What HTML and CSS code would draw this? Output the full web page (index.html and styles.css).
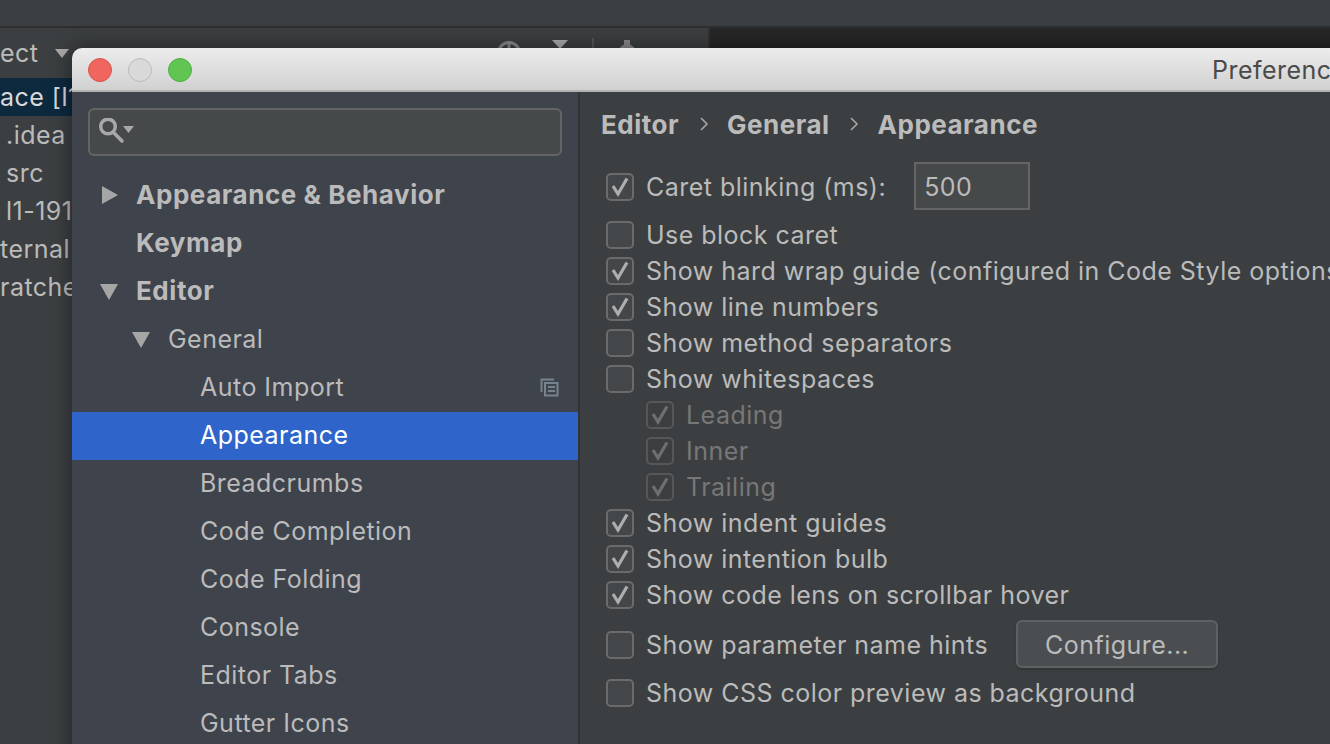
FILE: index.html
```html
<!DOCTYPE html>
<html lang="en">
<head>
<meta charset="utf-8">
<title>Preferences</title>
<link rel="stylesheet" href="styles.css">
</head>
<body>
<div class="ide">
  <div class="topbar"></div>
  <div class="workspace">
    <div class="project">
      <div class="project-head">
        <span class="project-title">ect</span>
        <span class="tri-small"></span>
        <span class="spacer"></span>
        <svg class="tool-globe" width="26" height="26" viewBox="0 0 26 26"><circle cx="13" cy="13" r="10.5" fill="none" stroke="#8a8a8a" stroke-width="3"/><path d="M13 2v22M2 13h22" stroke="#8a8a8a" stroke-width="3"/></svg>
        <span class="tri-tool"></span>
        <span class="tool-sep"></span>
        <svg class="tool-gear" width="28" height="28" viewBox="0 0 28 28"><circle cx="14" cy="14" r="9" fill="#8a8a8a"/><path d="M11 1h6v6h-6zM11 21h6v6h-6zM1 11h6v6H1zM21 11h6v6h-6z" fill="#8a8a8a"/></svg>
      </div>
      <div class="tree-row selected"><span>ace [l1-191</span></div>
      <div class="tree-row inset"><span>.idea</span></div>
      <div class="tree-row inset"><span>src</span></div>
      <div class="tree-row inset"><span>l1-191</span></div>
      <div class="tree-row"><span>ternal</span></div>
      <div class="tree-row"><span>ratches</span></div>
    </div>
    <div class="editor"></div>
  </div>
</div>

<div class="window">
  <div class="titlebar">
    <span class="light red"></span>
    <span class="light grey"></span>
    <span class="light green"></span>
    <span class="window-title">Preferences</span>
  </div>
  <div class="window-body">
    <aside class="sidebar">
      <div class="search">
        <svg class="search-icon" width="38" height="28" viewBox="0 0 38 28"><circle cx="10" cy="8.500" r="7.300" fill="none" stroke="#a8a8a8" stroke-width="3.500"/><path d="M15 14l9 9" stroke="#a8a8a8" stroke-width="3.500" stroke-linecap="round"/><path d="M25 8h11l-5.500 7z" fill="#a8a8a8"/></svg>
      </div>
      <nav class="nav">
        <div class="nav-row lvl0 strong"><span class="arrow right"></span>Appearance &amp; Behavior</div>
        <div class="nav-row lvl0 strong"><span class="arrow none"></span>Keymap</div>
        <div class="nav-row lvl0 strong"><span class="arrow down"></span>Editor</div>
        <div class="nav-row lvl1"><span class="arrow down"></span>General</div>
        <div class="nav-row lvl2">Auto Import
          <svg class="copy-icon" width="20" height="20" viewBox="0 0 20 20"><path d="M15 2.500H2.500V15" fill="none" stroke="#76838f" stroke-width="2"/><path d="M6 6h12.500v12.500H6z" fill="none" stroke="#76838f" stroke-width="2"/><path d="M9 10h7M9 14h7" stroke="#76838f" stroke-width="2"/></svg>
        </div>
        <div class="nav-row lvl2 active">Appearance</div>
        <div class="nav-row lvl2">Breadcrumbs</div>
        <div class="nav-row lvl2">Code Completion</div>
        <div class="nav-row lvl2">Code Folding</div>
        <div class="nav-row lvl2">Console</div>
        <div class="nav-row lvl2">Editor Tabs</div>
        <div class="nav-row lvl2">Gutter Icons</div>
      </nav>
    </aside>
    <main class="content">
      <div class="crumbs">
        <span>Editor</span>
        <svg class="chev" width="10" height="16" viewBox="0 0 10 16"><path d="M2 2l6 6-6 6" fill="none" stroke="#aaa" stroke-width="1.500"/></svg>
        <span>General</span>
        <svg class="chev" width="10" height="16" viewBox="0 0 10 16"><path d="M2 2l6 6-6 6" fill="none" stroke="#aaa" stroke-width="1.500"/></svg>
        <span>Appearance</span>
      </div>
      <div class="options">
        <label class="opt opt-first"><span class="box"><svg class="tick" viewBox="0 0 24 24"><path d="M5 11l5 8 9-15.500" /></svg></span>Caret blinking (ms):<span class="field">500</span></label>
        <label class="opt opt-second"><span class="box"></span>Use block caret</label>
        <label class="opt"><span class="box"><svg class="tick" viewBox="0 0 24 24"><path d="M5 11l5 8 9-15.500" /></svg></span>Show hard wrap guide (configured in Code Style options)</label>
        <label class="opt"><span class="box"><svg class="tick" viewBox="0 0 24 24"><path d="M5 11l5 8 9-15.500" /></svg></span>Show line numbers</label>
        <label class="opt"><span class="box"></span>Show method separators</label>
        <label class="opt"><span class="box"></span>Show whitespaces</label>
        <label class="opt sub"><span class="box"><svg class="tick" viewBox="0 0 24 24"><path d="M5 11l5 8 9-15.500" /></svg></span>Leading</label>
        <label class="opt sub"><span class="box"><svg class="tick" viewBox="0 0 24 24"><path d="M5 11l5 8 9-15.500" /></svg></span>Inner</label>
        <label class="opt sub"><span class="box"><svg class="tick" viewBox="0 0 24 24"><path d="M5 11l5 8 9-15.500" /></svg></span>Trailing</label>
        <label class="opt"><span class="box"><svg class="tick" viewBox="0 0 24 24"><path d="M5 11l5 8 9-15.500" /></svg></span>Show indent guides</label>
        <label class="opt"><span class="box"><svg class="tick" viewBox="0 0 24 24"><path d="M5 11l5 8 9-15.500" /></svg></span>Show intention bulb</label>
        <label class="opt"><span class="box"><svg class="tick" viewBox="0 0 24 24"><path d="M5 11l5 8 9-15.500" /></svg></span>Show code lens on scrollbar hover</label>
        <label class="opt opt-hints"><span class="box"></span>Show parameter name hints<span class="btn">Configure...</span></label>
        <label class="opt opt-last"><span class="box"></span>Show CSS color preview as background</label>
      </div>
    </main>
  </div>
</div>
</body>
</html>
```

FILE: styles.css
```css
html, body {
  margin: 0;
  height: 744px;
  overflow: hidden;
  background: #3c3f41;
  font-family: Inter, Roboto, "Liberation Sans", sans-serif;
  font-size: 25px;
  letter-spacing: .47px;
  color: #bbbbbb;
}
.ide { display: flex; flex-direction: column; height: 744px; }
.topbar { height: 26px; background: #3c3f41; border-bottom: 2px solid #2e2f30; flex: none; }
.workspace { display: flex; flex: 1; }
.project { width: 708px; background: #3c3f41; border-right: 2px solid #303132; flex: none; }
.project-head { display: flex; align-items: center; height: 50px; color: #bbb; }
.project-title { margin-right: 17px; }
.tri-small { width: 0; height: 0; border: 7px solid transparent; border-top: 9px solid #aaa; border-bottom: 0; }
.spacer { flex: 1; }
.tool-globe { margin-right: 30px; }
.tri-tool { width: 0; height: 0; border: 8px solid transparent; border-top: 9px solid #aaa; border-bottom: 0; margin-right: 24px; margin-top: -18px; }
.tool-sep { width: 2px; height: 30px; background: #555; margin-right: 19px; }
.tool-gear { margin-right: 67px; }
.tree-row { height: 38px; display: flex; align-items: center; padding-left: 0; white-space: nowrap; }
.tree-row.selected { background: #0d293e; color: #d8d8d8; }
.tree-row.inset { padding-left: 6px; }
.editor { flex: 1; background: #272727; }

.window {
  position: absolute;
  left: 72px;
  top: 48px;
  width: 1320px;
  height: 760px;
  border-radius: 10px 10px 0 0;
  background: #3c3f41;
  box-shadow: 0 0 22px rgba(0, 0, 0, .45);
  overflow: hidden;
  display: flex;
  flex-direction: column;
}
.titlebar {
  height: 40px;
  padding-top: 2px;
  flex: none;
  display: flex;
  align-items: center;
  padding-left: 16px;
  gap: 16px;
  background: linear-gradient(#ececec, #d1d1d1);
  border-bottom: 2px solid #b2b2b2;
}
.light { width: 22px; height: 22px; border-radius: 50%; border: 1px solid; flex: none; }
.red { background: #f0665e; border-color: #d9534b; }
.grey { background: #d9d9d9; border-color: #bcbcbc; }
.green { background: #60c553; border-color: #4fae43; }
.window-title { margin-left: 1004px; color: #4a4a4a; white-space: nowrap; }
.window-body { display: flex; flex: 1; min-height: 0; }
.sidebar { width: 506px; flex: none; background: #3f434c; border-right: 2px solid #323334; }
.search {
  margin: 16px;
  height: 44px;
  background: #45494a;
  border: 2px solid #646464;
  border-radius: 6px;
  display: flex;
  align-items: center;
  padding-left: 8px;
}
.nav-row { height: 48px; box-sizing: border-box; padding-bottom: 2px; display: flex; align-items: center; white-space: nowrap; position: relative; }
.strong { font-weight: 700; font-size: 26px; letter-spacing: .55px; padding-bottom: 3px; }
.lvl0 { padding-left: 30px; }
.lvl1 { padding-left: 60px; }
.lvl2 { padding-left: 128px; }
.active { background: #2f65ca; color: #fff; }
.arrow { width: 34px; flex: none; display: inline-block; height: 0; }
.lvl1 .arrow { width: 36px; }
.lvl0 .arrow.down { width: 36px; margin-left: -2px; }
.arrow.right::before {
  content: "";
  display: block;
  width: 0; height: 0;
  margin-top: -9px;
  border-top: 9px solid transparent;
  border-bottom: 9px solid transparent;
  border-left: 16px solid #a6a6a6;
}
.arrow.down::before {
  content: "";
  display: block;
  width: 0; height: 0;
  margin-top: -7px;
  border-left: 9px solid transparent;
  border-right: 9px solid transparent;
  border-top: 16px solid #a6a6a6;
}
.copy-icon { position: absolute; left: 467px; top: 13px; }

.content { flex: 1; min-width: 0; padding: 16px 0 0 21px; }
.crumbs { display: flex; align-items: center; height: 32px; font-weight: 700; font-size: 26px; letter-spacing: .5px; white-space: nowrap; }
.chev { margin: 0 18.500px 0 19.500px; }
.options { margin-top: 22px; padding-left: 5px; }
.opt { display: flex; align-items: center; height: 36px; box-sizing: border-box; white-space: nowrap; }
.box {
  width: 28px;
  height: 28px;
  box-sizing: border-box;
  border: 2px solid #6b6b6b;
  border-radius: 5px;
  background: #43474a;
  margin-right: 12px;
  flex: none;
  display: block;
}
.tick { display: block; width: 24px; height: 24px; fill: none; stroke: #aeaeae; stroke-width: 3.2; }
.sub { padding-left: 40px; color: #777; }
.sub .box { background: #3c3f41; border-color: #575757; }
.sub .tick { stroke: #6f6f6f; }
.opt-first { height: 48px; padding-top: 2px; margin-bottom: 7px; }
.field {
  width: 116px;
  height: 48px;
  box-sizing: border-box;
  margin-left: 28px;
  margin-bottom: 2px;
  border: 2px solid #646464;
  background: #45494a;
  display: flex;
  align-items: center;
  padding: 2px 0 0 8px;
}
.opt-hints { height: 48px; padding-top: 2px; margin-top: 7px; margin-bottom: 6px; }
.opt-last { padding-top: 2px; }
.btn {
  width: 202px;
  height: 48px;
  box-sizing: border-box;
  margin-left: 28px;
  margin-bottom: 2px;
  padding-top: 2px;
  background: #4a4e50;
  border: 2px solid #5e6163;
  border-radius: 6px;
  display: flex;
  align-items: center;
  justify-content: center;
  box-shadow: 0 2px 2px rgba(0, 0, 0, .15);
}
```
